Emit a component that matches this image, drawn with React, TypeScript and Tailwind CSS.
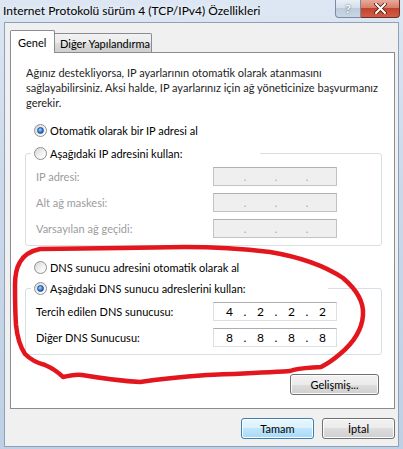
import React from 'react';

const Radio = ({ checked }: { checked?: boolean }) => (
  <span className="flex h-[13px] w-[13px] shrink-0 items-center justify-center rounded-full border border-[#8e8f8f] bg-[linear-gradient(135deg,#d6d6d6,#f4f4f4_60%,#ffffff)]">
    {checked && (
      <span className="h-[7px] w-[7px] rounded-full border border-[#1c4f9a] bg-[radial-gradient(circle_at_40%_35%,#9fdcff,#2d73d2_60%,#1a4fa0)]" />
    )}
  </span>
);

const IpField = ({ parts, disabled }: { parts?: string[]; disabled?: boolean }) => {
  const vals = parts ?? ['', '', '', ''];
  return (
    <div
      className={
        disabled
          ? 'flex h-[19px] w-[124px] items-center border border-[#c3c3c3] border-t-[#b0b0b0] bg-[#efefef] pl-[2px] text-[#a8a8a8]'
          : 'flex h-[19px] w-[124px] items-center border border-[#dbdfe6] border-t-[#abadb3] bg-white pl-[2px] text-[12px] text-black'
      }
    >
      {vals.map((v, i) => (
        <React.Fragment key={i}>
          <span className="w-[27px] text-center">{v}</span>
          {i < 3 && <span className="w-[4px] text-center">.</span>}
        </React.Fragment>
      ))}
    </div>
  );
};

const Row = ({ label, disabled, parts }: { label: string; disabled?: boolean; parts?: string[] }) => (
  <div className="flex items-center">
    <span className={disabled ? 'w-[177px] text-[#9c9c9c]' : 'w-[177px]'}>{label}</span>
    <IpField parts={parts} disabled={disabled} />
  </div>
);

const WinButton = ({ children, primary, className }: { children: React.ReactNode; primary?: boolean; className?: string }) => (
  <button
    className={
      (primary
        ? 'border-[#3c7fb1] bg-[linear-gradient(#eaf6fd,#d9f0fc_50%,#bee6fd_50%,#a7d9f5)] '
        : 'border-[#707070] bg-[linear-gradient(#f2f2f2,#ebebeb_50%,#dddddd_50%,#cfcfcf)] ') +
      'flex h-[21px] items-center justify-center rounded-[3px] border text-[11px] text-black shadow-[inset_0_0_0_1px_#fcfcfc] ' +
      (className ?? '')
    }
  >
    {children}
  </button>
);

export default function App() {
  return (
    <div className="relative h-[449px] w-[403px] overflow-hidden whitespace-nowrap bg-[linear-gradient(#dde7f3,#cbd9ea_40%,#bfd0e5)] font-['Lato','Liberation_Sans',sans-serif] text-[11px] leading-[15px] text-black">
      {/* title bar */}
      <div className="flex h-[22px] items-start">
        <div className="flex-1 pl-[3px] pt-[3px] text-[12px] leading-[15px] [text-shadow:0_0_6px_#ffffff]">
          Internet Protokolü sürüm 4 (TCP/IPv4) Özellikleri
        </div>
        <div className="mr-[3px] flex">
          <div className="flex h-[18px] w-[26px] items-center justify-center rounded-bl-[4px] border border-t-0 border-[#7a8ba0] bg-[linear-gradient(#e9eff6,#d3deea_50%,#bccbdd_50%,#c9d6e4)] text-[12px] font-bold text-white [text-shadow:0_0_2px_#34465c]">
            ?
          </div>
          <div className="flex h-[18px] w-[39px] items-center justify-center rounded-br-[4px] border border-l-0 border-t-0 border-[#6e2e26] bg-[linear-gradient(#e9a99a,#d7806c_45%,#c2432d_50%,#d15e45)]">
            <svg width="13" height="11" viewBox="0 0 13 11">
              <path d="M2 1 L11 10 M11 1 L2 10" stroke="#4b1a12" strokeWidth="3.6" strokeLinecap="round" />
              <path d="M2 1 L11 10 M11 1 L2 10" stroke="#ffffff" strokeWidth="2" strokeLinecap="round" />
            </svg>
          </div>
        </div>
      </div>

      {/* dialog body */}
      <div className="mx-[4px] h-[425px] border border-[#8da1b8] bg-[#f0f0f0] pl-[5px] pr-[3px] pt-[7px]">
        {/* tabs */}
        <div className="flex h-[22px] items-end">
          <div className="relative z-10 -mb-[1px] flex h-[23px] w-[45px] items-center rounded-t-[2px] border border-b-0 border-[#898c95] bg-white pl-[7px]">
            Genel
          </div>
          <div className="flex h-[19px] w-[97px] items-center rounded-tr-[2px] border border-b-0 border-l-0 border-[#898c95] bg-[linear-gradient(#f2f2f2,#ebebeb_50%,#dddddd_50%,#cfcfcf)] pl-[5px]">
            Diğer Yapılandırma
          </div>
        </div>

        {/* tab panel */}
        <div className="flex h-[357px] flex-col border border-[#898c95] bg-white">
          <p className="ml-[15px] mt-[12px] text-[#1e1e1e]">
            Ağınız destekliyorsa, IP ayarlarının otomatik olarak atanmasını
            <br />
            sağlayabilirsiniz. Aksi halde, IP ayarlarınız için ağ yöneticinize başvurmanız
            <br />
            gerekir.
          </p>

          <label className="ml-[23px] mt-[12px] flex h-[17px] items-center gap-[3px]">
            <Radio checked />
            <span>Otomatik olarak bir IP adresi al</span>
          </label>

          {/* manual IP group */}
          <div className="ml-[14px] mr-[12px] mt-[14px] rounded-[3px] border border-[#d5dfe5] pb-[7px] pl-[10px]">
            <div className="-ml-[5px] -mt-[9px] flex h-[17px] w-[229px] items-center gap-[3px] bg-white pl-[3px]">
              <Radio />
              <span>Aşağıdaki IP adresini kullan:</span>
            </div>
            <div className="mt-[5px] flex flex-col gap-[7px]">
              <Row label="IP adresi:" disabled />
              <Row label="Alt ağ maskesi:" disabled />
              <Row label="Varsayılan ağ geçidi:" disabled />
            </div>
          </div>

          <label className="ml-[23px] mt-[13px] flex h-[17px] items-center gap-[3px]">
            <Radio />
            <span>DNS sunucu adresini otomatik olarak al</span>
          </label>

          {/* manual DNS group */}
          <div className="ml-[14px] mr-[12px] mt-[12px] rounded-[3px] border border-[#d5dfe5] pb-[7px] pl-[10px]">
            <div className="-ml-[5px] -mt-[9px] flex h-[17px] w-[297px] items-center gap-[3px] bg-white pl-[3px]">
              <Radio checked />
              <span>Aşağıdaki DNS sunucu adreslerini kullan:</span>
            </div>
            <div className="mt-[5px] flex flex-col gap-[7px]">
              <Row label="Tercih edilen DNS sunucusu:" parts={['4', '2', '2', '2']} />
              <Row label="Diğer DNS Sunucusu:" parts={['8', '8', '8', '8']} />
            </div>
          </div>

          <div className="mr-[15px] mt-[19px] flex justify-end">
            <WinButton className="w-[89px]">Gelişmiş...</WinButton>
          </div>
        </div>

        {/* dialog buttons */}
        <div className="mt-[9px] flex justify-end gap-[8px]">
          <WinButton primary className="w-[73px]">
            Tamam
          </WinButton>
          <WinButton className="w-[73px]">İptal</WinButton>
        </div>
      </div>

      {/* red marker scribble drawn over the screenshot */}
      <svg className="pointer-events-none absolute inset-0" width="403" height="449" viewBox="0 0 403 449">
        <path
          d="M20 262 C24 255 30 251 40 249 C80 248 140 248 185 247 C215 247 245 249 270 252 C300 257 325 266 343 278 C357 290 364 302 363 315 C362 330 352 344 340 354 C333 360 327 364 321 367 C310 368 298 368 290 371 C260 373 230 374 207 375 C180 377 160 379 140 382 C120 381 100 378 82 375 C74 374 68 376 63 377 C58 372 52 368 45 365 C37 363 30 359 25 354 C19 345 17 335 16 325 C15 310 15 295 15 285 C15 275 17 267 20 262 Z"
          fill="none"
          stroke="#e3161e"
          strokeWidth="4.5"
          strokeLinejoin="round"
        />
      </svg>
    </div>
  );
}
